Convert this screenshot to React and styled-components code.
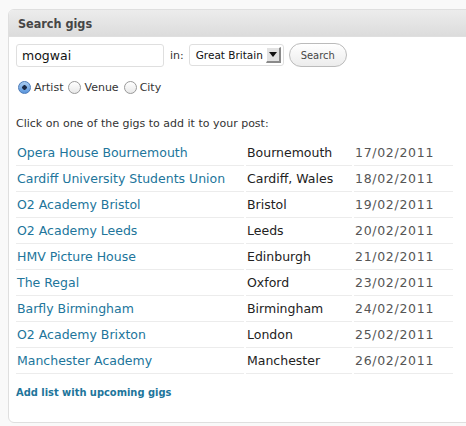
import React from 'react'
import styled, { createGlobalStyle } from 'styled-components'

const Global = createGlobalStyle`
  html, body { margin:0; padding:0; background:#f9f9f9; overflow:hidden; }
  body { font-family:"DejaVu Sans","Lucida Grande",sans-serif; color:#333; }
`

const gigs = [
  ['Opera House Bournemouth', 'Bournemouth', '17/02/2011'],
  ['Cardiff University Students Union', 'Cardiff, Wales', '18/02/2011'],
  ['O2 Academy Bristol', 'Bristol', '19/02/2011'],
  ['O2 Academy Leeds', 'Leeds', '20/02/2011'],
  ['HMV Picture House', 'Edinburgh', '21/02/2011'],
  ['The Regal', 'Oxford', '23/02/2011'],
  ['Barfly Birmingham', 'Birmingham', '24/02/2011'],
  ['O2 Academy Brixton', 'London', '25/02/2011'],
  ['Manchester Academy', 'Manchester', '26/02/2011'],
]

export default function App() {
  return (
    <>
      <Global />
      <Page>
        <Panel>
          <Header>Search gigs</Header>
          <Body>
            <SearchRow>
              <TextInput>mogwai</TextInput>
              <InLabel>in:</InLabel>
              <Select>
                <span>Great Britain</span>
                <Arrow>
                  <svg width="8" height="5" viewBox="0 0 8 5"><path d="M0 0h8L4 5z" fill="#111" /></svg>
                </Arrow>
              </Select>
              <Button>Search</Button>
            </SearchRow>
            <RadioRow>
              <Radio checked /> <RadioLabel>Artist</RadioLabel>
              <Radio /> <RadioLabel>Venue</RadioLabel>
              <Radio /> <RadioLabel>City</RadioLabel>
            </RadioRow>
            <Hint>Click on one of the gigs to add it to your post:</Hint>
            <Table>
              <colgroup>
                <col style={{ width: 228 }} />
                <col style={{ width: 106 }} />
                <col style={{ width: 99 }} />
              </colgroup>
              <tbody>
                {gigs.map(g => (
                  <tr key={g[0]}>
                    <Cell><Venue>{g[0]}</Venue></Cell>
                    <Cell>{g[1]}</Cell>
                    <Cell $muted>{g[2]}</Cell>
                  </tr>
                ))}
              </tbody>
            </Table>
            <AddLink>Add list with upcoming gigs</AddLink>
          </Body>
        </Panel>
      </Page>
    </>
  )
}

const Page = styled.div`
  padding:9px 0 0 8px;
  height:426px;
  box-sizing:border-box;
`
const Panel = styled.div`
  width:490px;
  border:1px solid #dfdfdf;
  border-radius:6px;
  background:#fff;
  overflow:hidden;
`
const Header = styled.div`
  height:26px;
  line-height:28px;
  padding-left:9px;
  font-family:"DejaVu Sans Condensed","DejaVu Sans",sans-serif;
  font-size:12.5px;
  font-weight:bold;
  color:#464646;
  background:linear-gradient(#ececec,#dcdcdc);
  border-bottom:1px solid #dfdfdf;
`
const Body = styled.div`
  padding:6px 0 23px 7px;
`
const SearchRow = styled.div`
  display:flex;
  align-items:center;
  height:24px;
`
const TextInput = styled.div`
  width:141px;
  height:21px;
  line-height:21px;
  padding-left:5px;
  border:1px solid #dfdfdf;
  border-radius:3px;
  font-size:12.5px;
  color:#111;
`
const InLabel = styled.span`
  margin-left:6px;
  font-size:11px;
  color:#333;
`
const Select = styled.div`
  margin-left:5px;
  width:95px;
  height:22px;
  box-sizing:border-box;
  border:1px solid #dfdfdf;
  border-radius:3px;
  display:flex;
  align-items:center;
  justify-content:space-between;
  padding:0 2px 0 6px;
  font-size:10.5px;
  white-space:nowrap;
  color:#111;
`
const Arrow = styled.span`
  width:15px;
  height:16px;
  box-sizing:border-box;
  display:flex;
  align-items:center;
  justify-content:center;
  background:#e2e2e2;
  border-right:2px solid #8a8a8a;
  border-bottom:2px solid #8a8a8a;
  border-top:1px solid #fff;
  border-left:1px solid #fff;
`
const Button = styled.div`
  margin-left:5px;
  width:58px;
  height:24px;
  box-sizing:border-box;
  border:1px solid #bbb;
  border-radius:12px;
  background:linear-gradient(#fff,#ececec);
  font-family:"DejaVu Sans Condensed","DejaVu Sans",sans-serif;
  font-size:11px;
  color:#464646;
  display:flex;
  align-items:center;
  justify-content:center;
`
const RadioRow = styled.div`
  display:flex;
  align-items:center;
  margin-top:13px;
  height:15px;
  font-size:11px;
`
const Radio = styled.span`
  width:13px;
  height:13px;
  box-sizing:border-box;
  border-radius:50%;
  margin-left:2px;
  border:1px solid ${p => (p.checked ? '#4a7ab8' : '#999')};
  background:${p => (p.checked
    ? 'radial-gradient(circle, #1b2b45 0 2px, transparent 2.5px), linear-gradient(#a8ccf0,#5a95dc)'
    : 'linear-gradient(#fff,#e8e8e8)')};
`
const RadioLabel = styled.span`
  margin:0 3px;
  color:#333;
`
const Hint = styled.div`
  margin-top:21px;
  font-size:11px;
  color:#333;
  height:16px;
  line-height:16px;
`
const Table = styled.table`
  margin-top:8px;
  margin-left:-2px;
  border-collapse:separate;
  border-spacing:2px 0;
  table-layout:fixed;
`
const Cell = styled.td`
  height:25px;
  padding:0 1px;
  border-bottom:1px solid #ececec;
  font-size:12.5px;
  letter-spacing:${p => (p.$muted ? '0.7px' : 'normal')};
  color:${p => (p.$muted ? '#555' : '#222')};
  white-space:nowrap;
  vertical-align:middle;
`
const Venue = styled.span`
  color:#21759b;
`
const AddLink = styled.div`
  margin-top:12px;
  font-family:"DejaVu Sans Condensed","DejaVu Sans",sans-serif;
  font-size:11px;
  font-weight:bold;
  color:#21759b;
`
